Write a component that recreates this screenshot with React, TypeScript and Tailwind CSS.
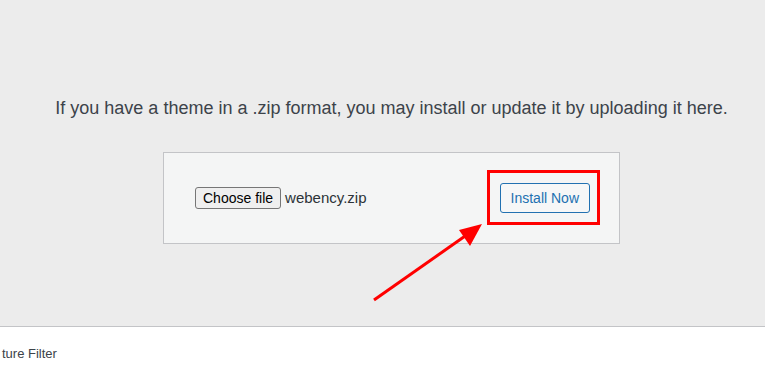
export default function App() {
  return (
    <div className="w-[765px] h-[373px] overflow-hidden flex flex-col bg-white font-['Liberation_Sans',Arial,sans-serif] text-[#3c434a]">
      <div className="relative h-[327px] bg-[#ececec] border-b border-[#c3c4c7] pl-[18px] flex flex-col items-center shrink-0">
        <p className="mt-[96px] text-[18px] leading-[24px]">
          If you have a theme in a .zip format, you may install or update it by uploading it here.
        </p>
        <div className="mt-[32px] w-[457px] h-[92px] bg-[#f4f5f5] border border-[#c3c4c7] flex items-center pl-[31px] pr-[29px]">
          <button className="h-[22px] px-[7px] bg-[#efefef] border border-[#767676] rounded-[3px] text-[14px] leading-none text-black">
            Choose file
          </button>
          <span className="ml-[4px] text-[15px] text-[#2c3338]">webency.zip</span>
          <div className="ml-auto relative">
            <button className="h-[30px] px-[10px] bg-[#f6f7f7] border border-[#2271b1] rounded-[3px] text-[14px] text-[#2271b1]">
              Install Now
            </button>
            <div className="absolute left-[-13px] top-[-13px] w-[113px] h-[55px] border-[3px] border-[#ff0000]" />
          </div>
        </div>
        <svg className="absolute left-0 top-0" width="765" height="326" viewBox="0 0 765 326">
          <line x1="374" y1="300" x2="468" y2="234" stroke="#ff0000" strokeWidth="3" />
          <polygon points="482,224 459,230 470,246" fill="#ff0000" />
        </svg>
      </div>
      <div className="pt-[17px] pl-[2px] text-[13px] text-[#3c434a]">ture Filter</div>
    </div>
  );
}
